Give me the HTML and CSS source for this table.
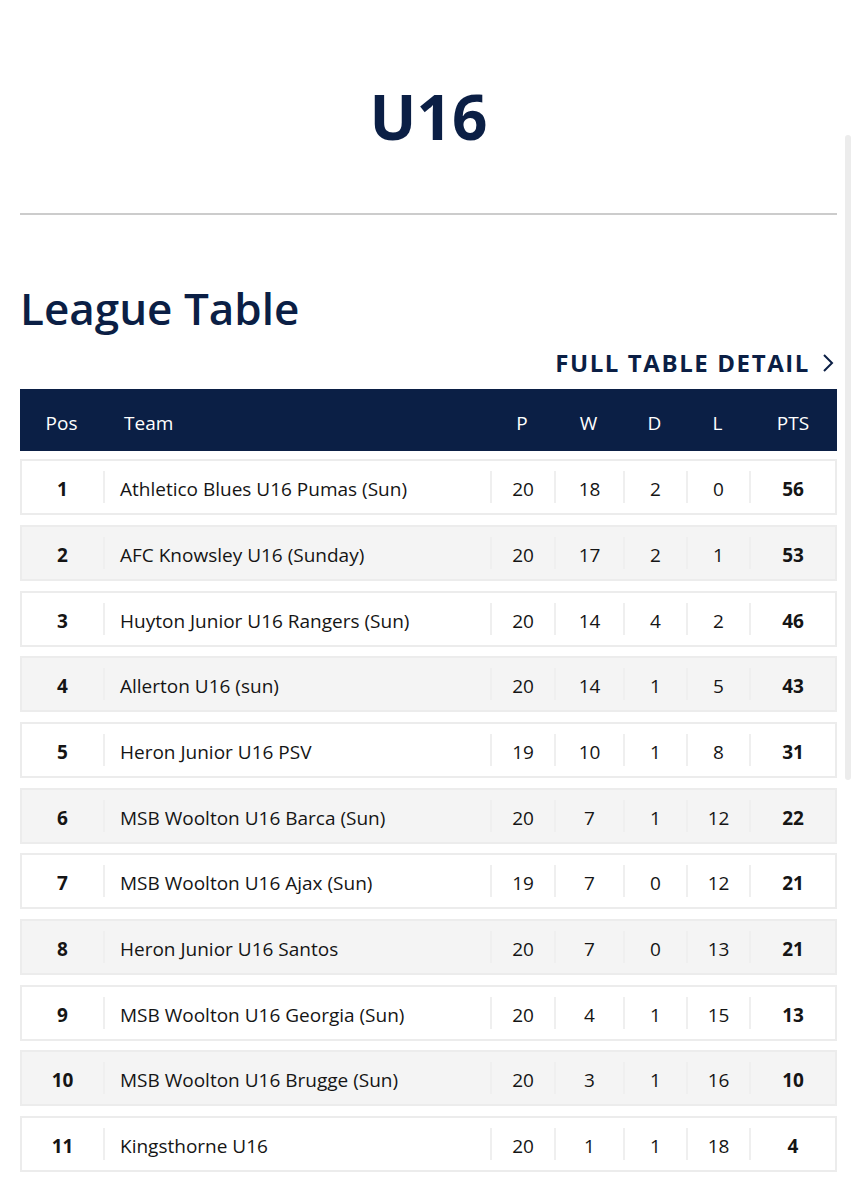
FILE: index.html
```html
<!DOCTYPE html>
<html lang="en">
<head>
<meta charset="utf-8">
<title>U16 League Table</title>
<link rel="stylesheet" href="styles.css">
</head>
<body>
<div class="scroll-track"></div>
<main class="page">
  <h1 class="title">U16</h1>
  <hr class="divider">
  <h2 class="section-title">League Table</h2>
  <div class="detail-link-row">
    <a class="detail-link" href="#">FULL TABLE DETAIL
      <svg class="chevron" width="12" height="20" viewBox="0 0 12 20"><path d="M2 2 L10 10 L2 18" fill="none" stroke="#0b1f45" stroke-width="2"/></svg>
    </a>
  </div>
  <div class="table">
    <div class="thead">
      <div class="h pos">Pos</div>
      <div class="h team">Team</div>
      <div class="h num">P</div>
      <div class="h num">W</div>
      <div class="h num">D</div>
      <div class="h num">L</div>
      <div class="h num">PTS</div>
    </div>
    <div class="row"><div class="c pos">1</div><div class="c team">Athletico Blues U16 Pumas (Sun)</div><div class="c num">20</div><div class="c num">18</div><div class="c num">2</div><div class="c num">0</div><div class="c num pts">56</div></div>
    <div class="row alt"><div class="c pos">2</div><div class="c team">AFC Knowsley U16 (Sunday)</div><div class="c num">20</div><div class="c num">17</div><div class="c num">2</div><div class="c num">1</div><div class="c num pts">53</div></div>
    <div class="row"><div class="c pos">3</div><div class="c team">Huyton Junior U16 Rangers (Sun)</div><div class="c num">20</div><div class="c num">14</div><div class="c num">4</div><div class="c num">2</div><div class="c num pts">46</div></div>
    <div class="row alt"><div class="c pos">4</div><div class="c team">Allerton U16 (sun)</div><div class="c num">20</div><div class="c num">14</div><div class="c num">1</div><div class="c num">5</div><div class="c num pts">43</div></div>
    <div class="row"><div class="c pos">5</div><div class="c team">Heron Junior U16 PSV</div><div class="c num">19</div><div class="c num">10</div><div class="c num">1</div><div class="c num">8</div><div class="c num pts">31</div></div>
    <div class="row alt"><div class="c pos">6</div><div class="c team">MSB Woolton U16 Barca (Sun)</div><div class="c num">20</div><div class="c num">7</div><div class="c num">1</div><div class="c num">12</div><div class="c num pts">22</div></div>
    <div class="row"><div class="c pos">7</div><div class="c team">MSB Woolton U16 Ajax (Sun)</div><div class="c num">19</div><div class="c num">7</div><div class="c num">0</div><div class="c num">12</div><div class="c num pts">21</div></div>
    <div class="row alt"><div class="c pos">8</div><div class="c team">Heron Junior U16 Santos</div><div class="c num">20</div><div class="c num">7</div><div class="c num">0</div><div class="c num">13</div><div class="c num pts">21</div></div>
    <div class="row"><div class="c pos">9</div><div class="c team">MSB Woolton U16 Georgia (Sun)</div><div class="c num">20</div><div class="c num">4</div><div class="c num">1</div><div class="c num">15</div><div class="c num pts">13</div></div>
    <div class="row alt"><div class="c pos">10</div><div class="c team">MSB Woolton U16 Brugge (Sun)</div><div class="c num">20</div><div class="c num">3</div><div class="c num">1</div><div class="c num">16</div><div class="c num pts">10</div></div>
    <div class="row"><div class="c pos">11</div><div class="c team">Kingsthorne U16</div><div class="c num">20</div><div class="c num">1</div><div class="c num">1</div><div class="c num">18</div><div class="c num pts">4</div></div>
  </div>
</main>
</body>
</html>
```
FILE: styles.css
```css
html, body {
  margin: 0;
  padding: 0;
  background: #ffffff;
}
body {
  font-family: "Open Sans", "Noto Sans", sans-serif;
  color: #111111;
  overflow: hidden;
}
.scroll-track {
  position: fixed;
  left: 845px;
  top: 135px;
  width: 6px;
  height: 645px;
  background: #ececec;
  border-radius: 3px;
}
.page {
  padding: 0 20px;
}
.title {
  margin: 0;
  padding-top: 78px;
  text-align: center;
  font-size: 62px;
  line-height: 76px;
  font-weight: 700;
  color: #0b1f45;
}
.divider {
  margin: 59px 0 0;
  border: 0;
  height: 2px;
  background: #cccccc;
}
.section-title {
  margin: 0;
  padding-top: 64px;
  font-size: 44px;
  line-height: 58px;
  font-weight: 600;
  color: #0b1f45;
}
.detail-link-row {
  display: flex;
  justify-content: flex-end;
  padding-right: 3px;
  margin-top: 9px;
}
.detail-link {
  display: flex;
  align-items: center;
  gap: 12px;
  font-size: 24px;
  line-height: 34px;
  font-weight: 700;
  letter-spacing: 1.6px;
  color: #0b1f45;
  text-decoration: none;
}
.table {
  margin-top: 9px;
  display: flex;
  flex-direction: column;
  gap: 9.7px;
}
.thead, .row {
  display: grid;
  grid-template-columns: 83px 387px 64px 69px 63px 63px 1fr;
  align-items: center;
}
.row {
  grid-template-columns: 81px 387px 64px 69px 63px 63px 1fr;
}
.thead {
  height: 62px;
  box-sizing: border-box;
  padding-top: 5px;
  margin-bottom: -1.5px;
  background: #0b1f45;
  color: #ffffff;
}
.h {
  font-size: 19px;
  font-weight: 400;
}
.h.pos { text-align: center; }
.h.team { padding-left: 21px; }
.h.num { text-align: center; }
.row {
  height: 56px;
  box-sizing: border-box;
  border: 2px solid #ececec;
  background: #ffffff;
  padding: 10px 0;
}
.row.alt {
  background: #f4f4f4;
}
.c {
  font-size: 19px;
  line-height: 32px;
  padding-top: 2px;
  height: 32px;
  box-sizing: border-box;
  color: #151515;
  border-left: 2px solid #efefef;
}
.c.pos {
  border-left: 0;
  text-align: center;
  font-weight: 700;
}
.c.team {
  padding-left: 15px;
}
.c.num {
  text-align: center;
}
.c.pts {
  font-weight: 700;
}
```
